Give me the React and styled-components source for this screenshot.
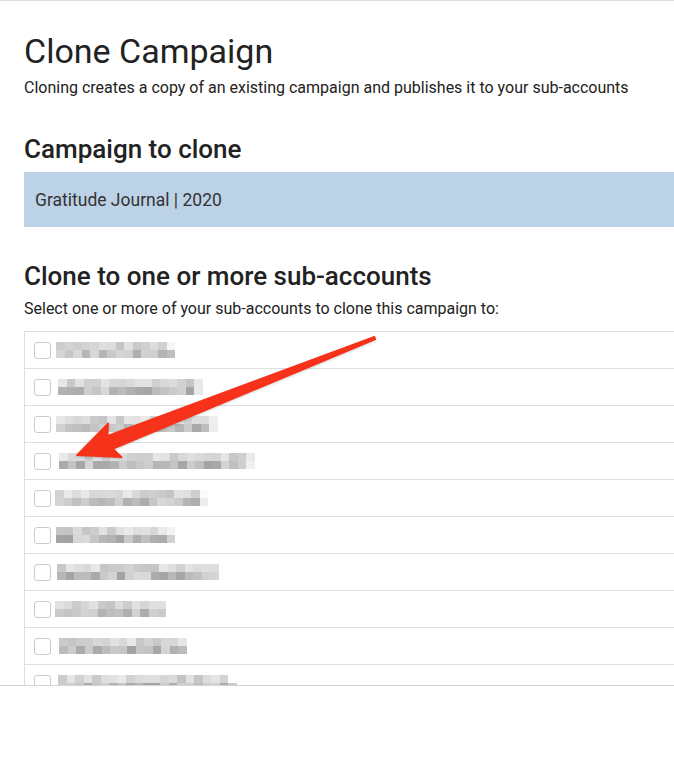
import styled, { createGlobalStyle } from 'styled-components';

const GlobalStyle = createGlobalStyle`
  * {
    box-sizing: border-box;
  }

  html, body, #root {
    margin: 0;
    padding: 0;
    background: #ffffff;
  }

  body {
    font-family: Roboto, "Liberation Sans", sans-serif;
    color: #222222;
  }
`;

const Page = styled.div`
  position: relative;
  height: 686px;
  border-top: 1px solid #dddddd;
  border-bottom: 1px solid #d4d4d4;
  overflow: hidden;
  padding-left: 24px;
`;

const Title = styled.h1`
  margin: 0;
  padding-top: 30px;
  font-size: 34px;
  font-weight: 400;
  line-height: 40px;
  color: #222222;
`;

const Lead = styled.p`
  margin: 7px 0 0;
  font-size: 16px;
  line-height: 20px;
  color: #222222;
`;

const SectionTitle = styled.h2`
  margin: ${({ $top }) => $top}px 0 0;
  font-size: 26px;
  font-weight: 500;
  line-height: 30px;
  color: #222222;
`;

const CampaignBox = styled.div`
  margin-top: 8px;
  height: 55px;
  display: flex;
  align-items: center;
  padding-left: 11px;
  background: #bcd2e6;
  font-size: 17.5px;
  color: #333333;
`;

const Hint = styled.p`
  margin: 8px 0 0;
  font-size: 16px;
  line-height: 20px;
  color: #222222;
`;

const AccountList = styled.ul`
  list-style: none;
  margin: 12px 0 0;
  padding: 0;
  border-top: 1px solid #dedede;
  border-left: 1px solid #dedede;
`;

const AccountRow = styled.li`
  display: flex;
  align-items: center;
  height: 37px;
  border-bottom: 1px solid #dedede;
  padding-left: 9px;
`;

const Checkbox = styled.span`
  width: 17px;
  height: 17px;
  flex: none;
  border: 1px solid #cccccc;
  border-radius: 3px;
  background: #ffffff;
`;

const Mosaic = styled.div`
  display: grid;
  grid-template-rows: 8px 8px;
  grid-auto-flow: column;
  grid-auto-columns: 8.5px;
  margin-left: ${({ $offset }) => $offset}px;
`;

const Cell = styled.span`
  background: ${({ $shade }) => $shade};
`;

const Arrow = styled.svg`
  position: absolute;
  left: 0;
  top: 0;
  width: 100%;
  height: 100%;
  pointer-events: none;
  filter: drop-shadow(0 1px 1px rgba(0, 0, 0, 0.18));
`;

// blurred sub-account names: cell count and left offset per row
const accounts = [
  { cells: 14, offset: 5, seed: 3 },
  { cells: 17, offset: 7, seed: 11 },
  { cells: 19, offset: 5, seed: 23 },
  { cells: 23, offset: 8, seed: 41 },
  { cells: 18, offset: 4, seed: 57 },
  { cells: 14, offset: 5, seed: 71 },
  { cells: 19, offset: 6, seed: 89 },
  { cells: 13, offset: 4, seed: 97 },
  { cells: 15, offset: 8, seed: 113 },
  { cells: 21, offset: 7, seed: 131 },
];

function shades(cells, seed) {
  let s = seed * 9301 + 49297;
  const rnd = () => {
    s = (s * 9301 + 49297) % 233280;
    return s / 233280;
  };
  const out = [];
  for (let i = 0; i < cells; i++) {
    const edge = i === cells - 1 ? 22 : 0;
    const top = Math.round(196 + rnd() * 38 + edge);
    const bottom = Math.round(162 + rnd() * 56 + edge);
    out.push(`rgb(${top},${top},${top})`);
    out.push(`rgb(${bottom},${bottom},${bottom})`);
  }
  return out;
}

export default function App() {
  return (
    <>
      <GlobalStyle />
      <Page>
        <Title>Clone Campaign</Title>
        <Lead>Cloning creates a copy of an existing campaign and publishes it to your sub-accounts</Lead>

        <SectionTitle $top={36}>Campaign to clone</SectionTitle>
        <CampaignBox>Gratitude Journal | 2020</CampaignBox>

        <SectionTitle $top={34}>Clone to one or more sub-accounts</SectionTitle>
        <Hint>Select one or more of your sub-accounts to clone this campaign to:</Hint>

        <AccountList>
          {accounts.map((a, i) => (
            <AccountRow key={i}>
              <Checkbox />
              <Mosaic $offset={a.offset}>
                {shades(a.cells, a.seed).map((c, j) => (
                  <Cell key={j} $shade={c} />
                ))}
              </Mosaic>
            </AccountRow>
          ))}
        </AccountList>

        <Arrow viewBox="0 0 674 686">
          <path
            d="M374.5 336.6 L375.5 339.4 L112.5 449 L121 457.5 L76 455.5 L107.5 423.5 L107 436 Z"
            fill="#f7321a"
            stroke="#f7321a"
            strokeWidth="1.5"
            strokeLinejoin="round"
          />
        </Arrow>
      </Page>
    </>
  );
}
